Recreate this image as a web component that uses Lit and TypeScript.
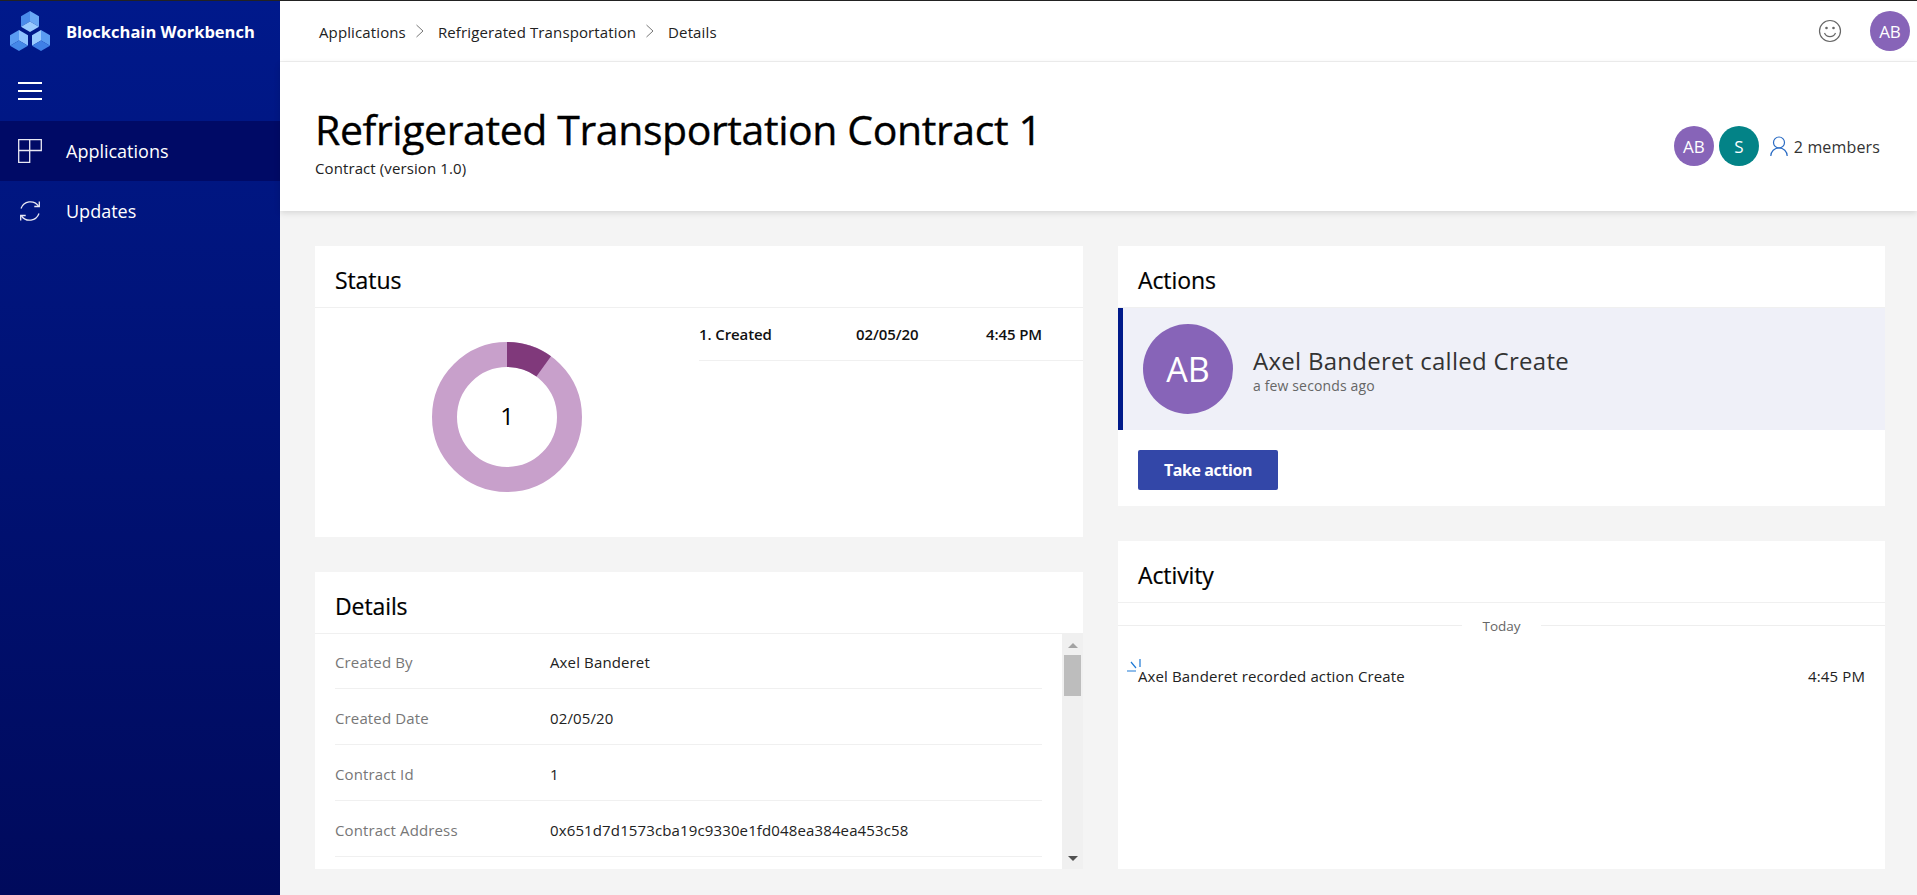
import { LitElement, html, css, svg } from 'lit';
import { customElement } from 'lit/decorators.js';

// isometric cube seen from below, colours are left / right / bottom face
const cube = (x: number, y: number, l: string, r: string, b: string) => svg`
  <polygon points="${x},${y - 10.5} ${x},${y} ${x - 9},${y + 5.25} ${x - 9},${y - 5.25}" fill="${l}"/>
  <polygon points="${x},${y - 10.5} ${x + 9},${y - 5.25} ${x + 9},${y + 5.25} ${x},${y}" fill="${r}"/>
  <polygon points="${x},${y} ${x + 9},${y + 5.25} ${x},${y + 10.5} ${x - 9},${y + 5.25}" fill="${b}"/>`;

const details = [
  ['Created By', 'Axel Banderet'],
  ['Created Date', '02/05/20'],
  ['Contract Id', '1'],
  ['Contract Address', '0x651d7d1573cba19c9330e1fd048ea384ea453c58'],
];

@customElement('app-root')
export class AppRoot extends LitElement {
  static styles = css`
    :host {
      display: flex;
      width: 1917px;
      height: 895px;
      overflow: hidden;
      background: #f4f4f4;
      border-top: 1px solid #222;
      box-sizing: border-box;
      font-family: "Open Sans", "Noto Sans", sans-serif;
      color: #000;
    }
    .sidebar {
      width: 280px;
      flex: none;
      background: linear-gradient(180deg, #00198b 0%, #000a5c 100%);
      color: #fff;
    }
    .brand {
      display: flex;
      align-items: center;
      height: 60px;
      padding-left: 9px;
      gap: 15px;
      font-size: 16.5px;
      font-weight: 700;
    }
    .menu {
      height: 60px;
      padding-left: 18px;
      display: flex;
      align-items: center;
    }
    .nav {
      display: flex;
      align-items: center;
      height: 60px;
      padding-left: 18px;
      gap: 24px;
      font-size: 18px;
    }
    .nav.active { background: #000a66; }
    .main {
      flex: 1;
      display: flex;
      flex-direction: column;
      min-width: 0;
    }
    .topbar {
      height: 61px;
      box-sizing: border-box;
      flex: none;
      background: #fff;
      border-bottom: 1px solid #f0f0f0;
      display: flex;
      align-items: center;
      padding: 2px 7px 0 39px;
      font-size: 15px;
      letter-spacing: 0.12px;
      color: #222;
    }
    .crumb-sep { margin: 0 13px 0 9px; display: flex; margin-top: -2px; }
    .spacer { flex: 1; }
    .avatar {
      width: 40px;
      height: 40px;
      border-radius: 50%;
      background: #8764b8;
      color: #fff;
      display: flex;
      align-items: center;
      justify-content: center;
      font-size: 17px;
      letter-spacing: 0;
      flex: none;
    }
    .avatar.teal { background: #038387; }
    .topbar .avatar { margin-top: -2px; }
    .smile { margin-right: 28px; display: flex; margin-top: -2px; }
    .pagehead {
      height: 149px;
      flex: none;
      box-sizing: border-box;
      background: #fff;
      box-shadow: 0 2px 6px rgba(0, 0, 0, 0.12);
      display: flex;
      align-items: flex-start;
      padding: 42px 37px 0 35px;
      position: relative;
    }
    h1 {
      margin: 0;
      font-size: 41px;
      font-weight: 400;
      line-height: 50px;
      letter-spacing: -0.4px;
      -webkit-text-stroke: 0.35px #000;
    }
    .sub {
      margin-top: 5px;
      font-size: 15px;
      letter-spacing: 0.1px;
      color: #222;
      line-height: 18px;
    }
    .members {
      display: flex;
      align-items: center;
      gap: 5px;
      margin-top: 22px;
      font-size: 16px;
      letter-spacing: 0.15px;
      color: #333;
    }
    .members svg { margin: 0 1px 0 6px; }
    .count { padding-top: 2px; }
    .grid {
      flex: 1;
      display: grid;
      grid-template-columns: 768px 767px;
      column-gap: 35px;
      padding: 35px 0 0 35px;
    }
    .col {
      display: flex;
      flex-direction: column;
      gap: 35px;
    }
    .card {
      background: #fff;
      display: flex;
      flex-direction: column;
      min-height: 0;
    }
    .status { height: 291px; }
    .details { height: 297px; }
    .actions { height: 260px; }
    .activity { height: 328px; }
    .card h2 {
      margin: 0;
      height: 62px;
      box-sizing: border-box;
      flex: none;
      border-bottom: 1px solid #f0f0f0;
      padding-left: 20px;
      font-size: 23px;
      font-weight: 400;
      line-height: 68px;
      letter-spacing: -0.1px;
      -webkit-text-stroke: 0.2px #000;
    }
    .status-body { display: flex; flex: 1; }
    .donut-wrap {
      width: 384px;
      display: flex;
      justify-content: center;
      padding: 34px 0 0 0;
      box-sizing: border-box;
    }
    .donut { position: relative; width: 150px; height: 150px; }
    .donut span {
      position: absolute;
      inset: 0 0 3px 0;
      display: flex;
      align-items: center;
      justify-content: center;
      font-size: 24px;
    }
    .state {
      flex: 1;
      align-self: flex-start;
      display: grid;
      grid-template-columns: 157px 130px 1fr;
      height: 52px;
      line-height: 53px;
      border-bottom: 1px solid #f0f0f0;
      font-size: 15px;
      font-weight: 600;
      letter-spacing: -0.1px;
      color: #111;
    }
    .detail-body { flex: 1; display: flex; min-height: 0; }
    .rows { flex: 1; padding: 0 20px; overflow: hidden; }
    .row {
      display: flex;
      align-items: center;
      height: 56px;
      padding-top: 2px;
      box-sizing: border-box;
      border-bottom: 1px solid #f0f0f0;
      font-size: 15px;
      letter-spacing: 0.13px;
      color: #222;
    }
    .row:first-child { margin-top: -1px; }
    .row b { width: 215px; font-weight: 400; color: #777; }
    .scrollbar {
      width: 21px;
      flex: none;
      background: #f0f0f0;
      display: flex;
      flex-direction: column;
      align-items: center;
      box-sizing: border-box;
      padding: 9px 0 8px;
    }
    .thumb { width: 17px; height: 41px; background: #bdbdbd; margin-top: 7px; }
    .arrow-up, .arrow-down {
      width: 0;
      height: 0;
      border-left: 5px solid transparent;
      border-right: 5px solid transparent;
    }
    .arrow-up { border-bottom: 5px solid #a3a3a3; }
    .arrow-down { border-top: 5px solid #505050; margin-top: auto; }
    .act-panel {
      height: 122px;
      box-sizing: border-box;
      background: #eff0f8;
      border-left: 5px solid #001a8a;
      display: flex;
      align-items: center;
      padding-left: 20px;
      gap: 20px;
      flex: none;
    }
    .avatar.big { width: 90px; height: 90px; font-size: 34px; }
    .act-title { font-size: 24px; letter-spacing: 0.28px; color: #333; line-height: 32px; }
    .act-sub { font-size: 14px; letter-spacing: 0.14px; color: #666; line-height: 17px; }
    .btn-row { padding: 20px 0 0 20px; }
    button {
      width: 140px;
      height: 40px;
      border: none;
      border-radius: 2px;
      background: #3347a8;
      color: #fff;
      font: 700 16px "Open Sans", sans-serif;
      letter-spacing: -0.4px;
      padding: 0;
    }
    .today {
      display: flex;
      align-items: center;
      gap: 20px;
      height: 45px;
      font-size: 13.5px;
      color: #666;
      flex: none;
    }
    .today i { flex: 1; height: 1px; background: #eee; }
    .entry {
      position: relative;
      display: flex;
      justify-content: space-between;
      padding: 18px 20px 0;
      line-height: 20px;
      font-size: 15px;
      letter-spacing: 0.12px;
      color: #222;
    }
    .spin { position: absolute; left: 9px; top: 11px; }
  `;

  render() {
    return html`
      <aside class="sidebar">
        <div class="brand">
          <svg width="42" height="42" viewBox="0 0 42 42">
            ${cube(21, 11.5, '#4a8bea', '#6aa8f5', '#9acbff')}
            ${cube(10, 30.5, '#5a9cf2', '#8fc3ff', '#4488e8')}
            ${cube(32, 30.5, '#9acbff', '#5a9cf2', '#3f7fe6')}
          </svg>
          <span>Blockchain Workbench</span>
        </div>
        <div class="menu">
          <svg width="24" height="20" viewBox="0 0 24 20" stroke="#fff" stroke-width="2">
            <path d="M0 2h24M0 10h24M0 18h24"/>
          </svg>
        </div>
        <div class="nav active">
          <svg width="24" height="24" viewBox="0 0 24 24" fill="none" stroke="#e8e8f4" stroke-width="1.3">
            <path d="M.7.7h22.6v10.8H.7zM.7 11.5h11v11.8H.7zM11.7.7v10.8"/>
          </svg>
          <span>Applications</span>
        </div>
        <div class="nav">
          <svg width="24" height="24" viewBox="0 0 24 24" fill="none" stroke="#e8e8f4" stroke-width="1.3">
            <path d="M3 9.5A10 10 0 0 1 20.5 7M3.5 17A10 10 0 0 0 21 14.5"/>
            <path d="M21.3 2.5v5h-5M2.7 21.5v-5h5"/>
          </svg>
          <span>Updates</span>
        </div>
      </aside>
      <div class="main">
        <div class="topbar">
          <span>Applications</span>
          <span class="crumb-sep">${this.chevron()}</span>
          <span>Refrigerated Transportation</span>
          <span class="crumb-sep">${this.chevron()}</span>
          <span>Details</span>
          <span class="spacer"></span>
          <span class="smile">
            <svg width="24" height="24" viewBox="0 0 24 24" fill="none" stroke="#666" stroke-width="1.2">
              <circle cx="12" cy="12" r="10.5"/>
              <path d="M6.5 14a6 6 0 0 0 11 0"/>
              <circle cx="8.5" cy="9" r=".7" fill="#666"/>
              <circle cx="15.5" cy="9" r=".7" fill="#666"/>
            </svg>
          </span>
          <span class="avatar">AB</span>
        </div>
        <header class="pagehead">
          <div>
            <h1>Refrigerated Transportation Contract 1</h1>
            <div class="sub">Contract (version 1.0)</div>
          </div>
          <span class="spacer"></span>
          <div class="members">
            <span class="avatar">AB</span>
            <span class="avatar teal">S</span>
            <svg width="18" height="20" viewBox="0 0 18 20" fill="none" stroke="#2b6cc4" stroke-width="1.2">
              <circle cx="9" cy="6.5" r="5.5"/>
              <path d="M.8 20a8.2 8.2 0 0 1 16.4 0"/>
            </svg>
            <span class="count">2 members</span>
          </div>
        </header>
        <div class="grid">
          <div class="col">
            <section class="card status">
              <h2>Status</h2>
              <div class="status-body">
                <div class="donut-wrap">
                  <div class="donut">
                    <svg width="150" height="150" viewBox="0 0 150 150">
                      <circle cx="75" cy="75" r="62.5" fill="none" stroke="#c8a0cb" stroke-width="25"/>
                      <path d="M75 0A75 75 0 0 1 119 14.3L104.4 34.4A50 50 0 0 0 75 25Z" fill="#80397b"/>
                    </svg>
                    <span>1</span>
                  </div>
                </div>
                <div class="state">
                  <span>1. Created</span><span>02/05/20</span><span>4:45 PM</span>
                </div>
              </div>
            </section>
            <section class="card details">
              <h2>Details</h2>
              <div class="detail-body">
                <div class="rows">
                  ${details.map(([k, v]) => html`<div class="row"><b>${k}</b><span>${v}</span></div>`)}
                </div>
                <div class="scrollbar">
                  <div class="arrow-up"></div>
                  <div class="thumb"></div>
                  <div class="arrow-down"></div>
                </div>
              </div>
            </section>
          </div>
          <div class="col">
            <section class="card actions">
              <h2>Actions</h2>
              <div class="act-panel">
                <span class="avatar big">AB</span>
                <div>
                  <div class="act-title">Axel Banderet called Create</div>
                  <div class="act-sub">a few seconds ago</div>
                </div>
              </div>
              <div class="btn-row"><button>Take action</button></div>
            </section>
            <section class="card activity">
              <h2>Activity</h2>
              <div class="today"><i></i><span>Today</span><i></i></div>
              <div class="entry">
                <svg class="spin" width="14" height="13" viewBox="0 0 14 13" fill="none" stroke="#1f7ad6" stroke-width="1.2">
                  <path d="M13 0v8M4 3l5 6M0 12h9"/>
                </svg>
                <span>Axel Banderet recorded action Create</span>
                <span>4:45 PM</span>
              </div>
            </section>
          </div>
        </div>
      </div>
    `;
  }

  chevron() {
    return html`<svg width="10" height="14" viewBox="0 0 10 14" fill="none" stroke="#777" stroke-width="1"><path d="M1.5 1l6.5 6-6.5 6"/></svg>`;
  }
}
